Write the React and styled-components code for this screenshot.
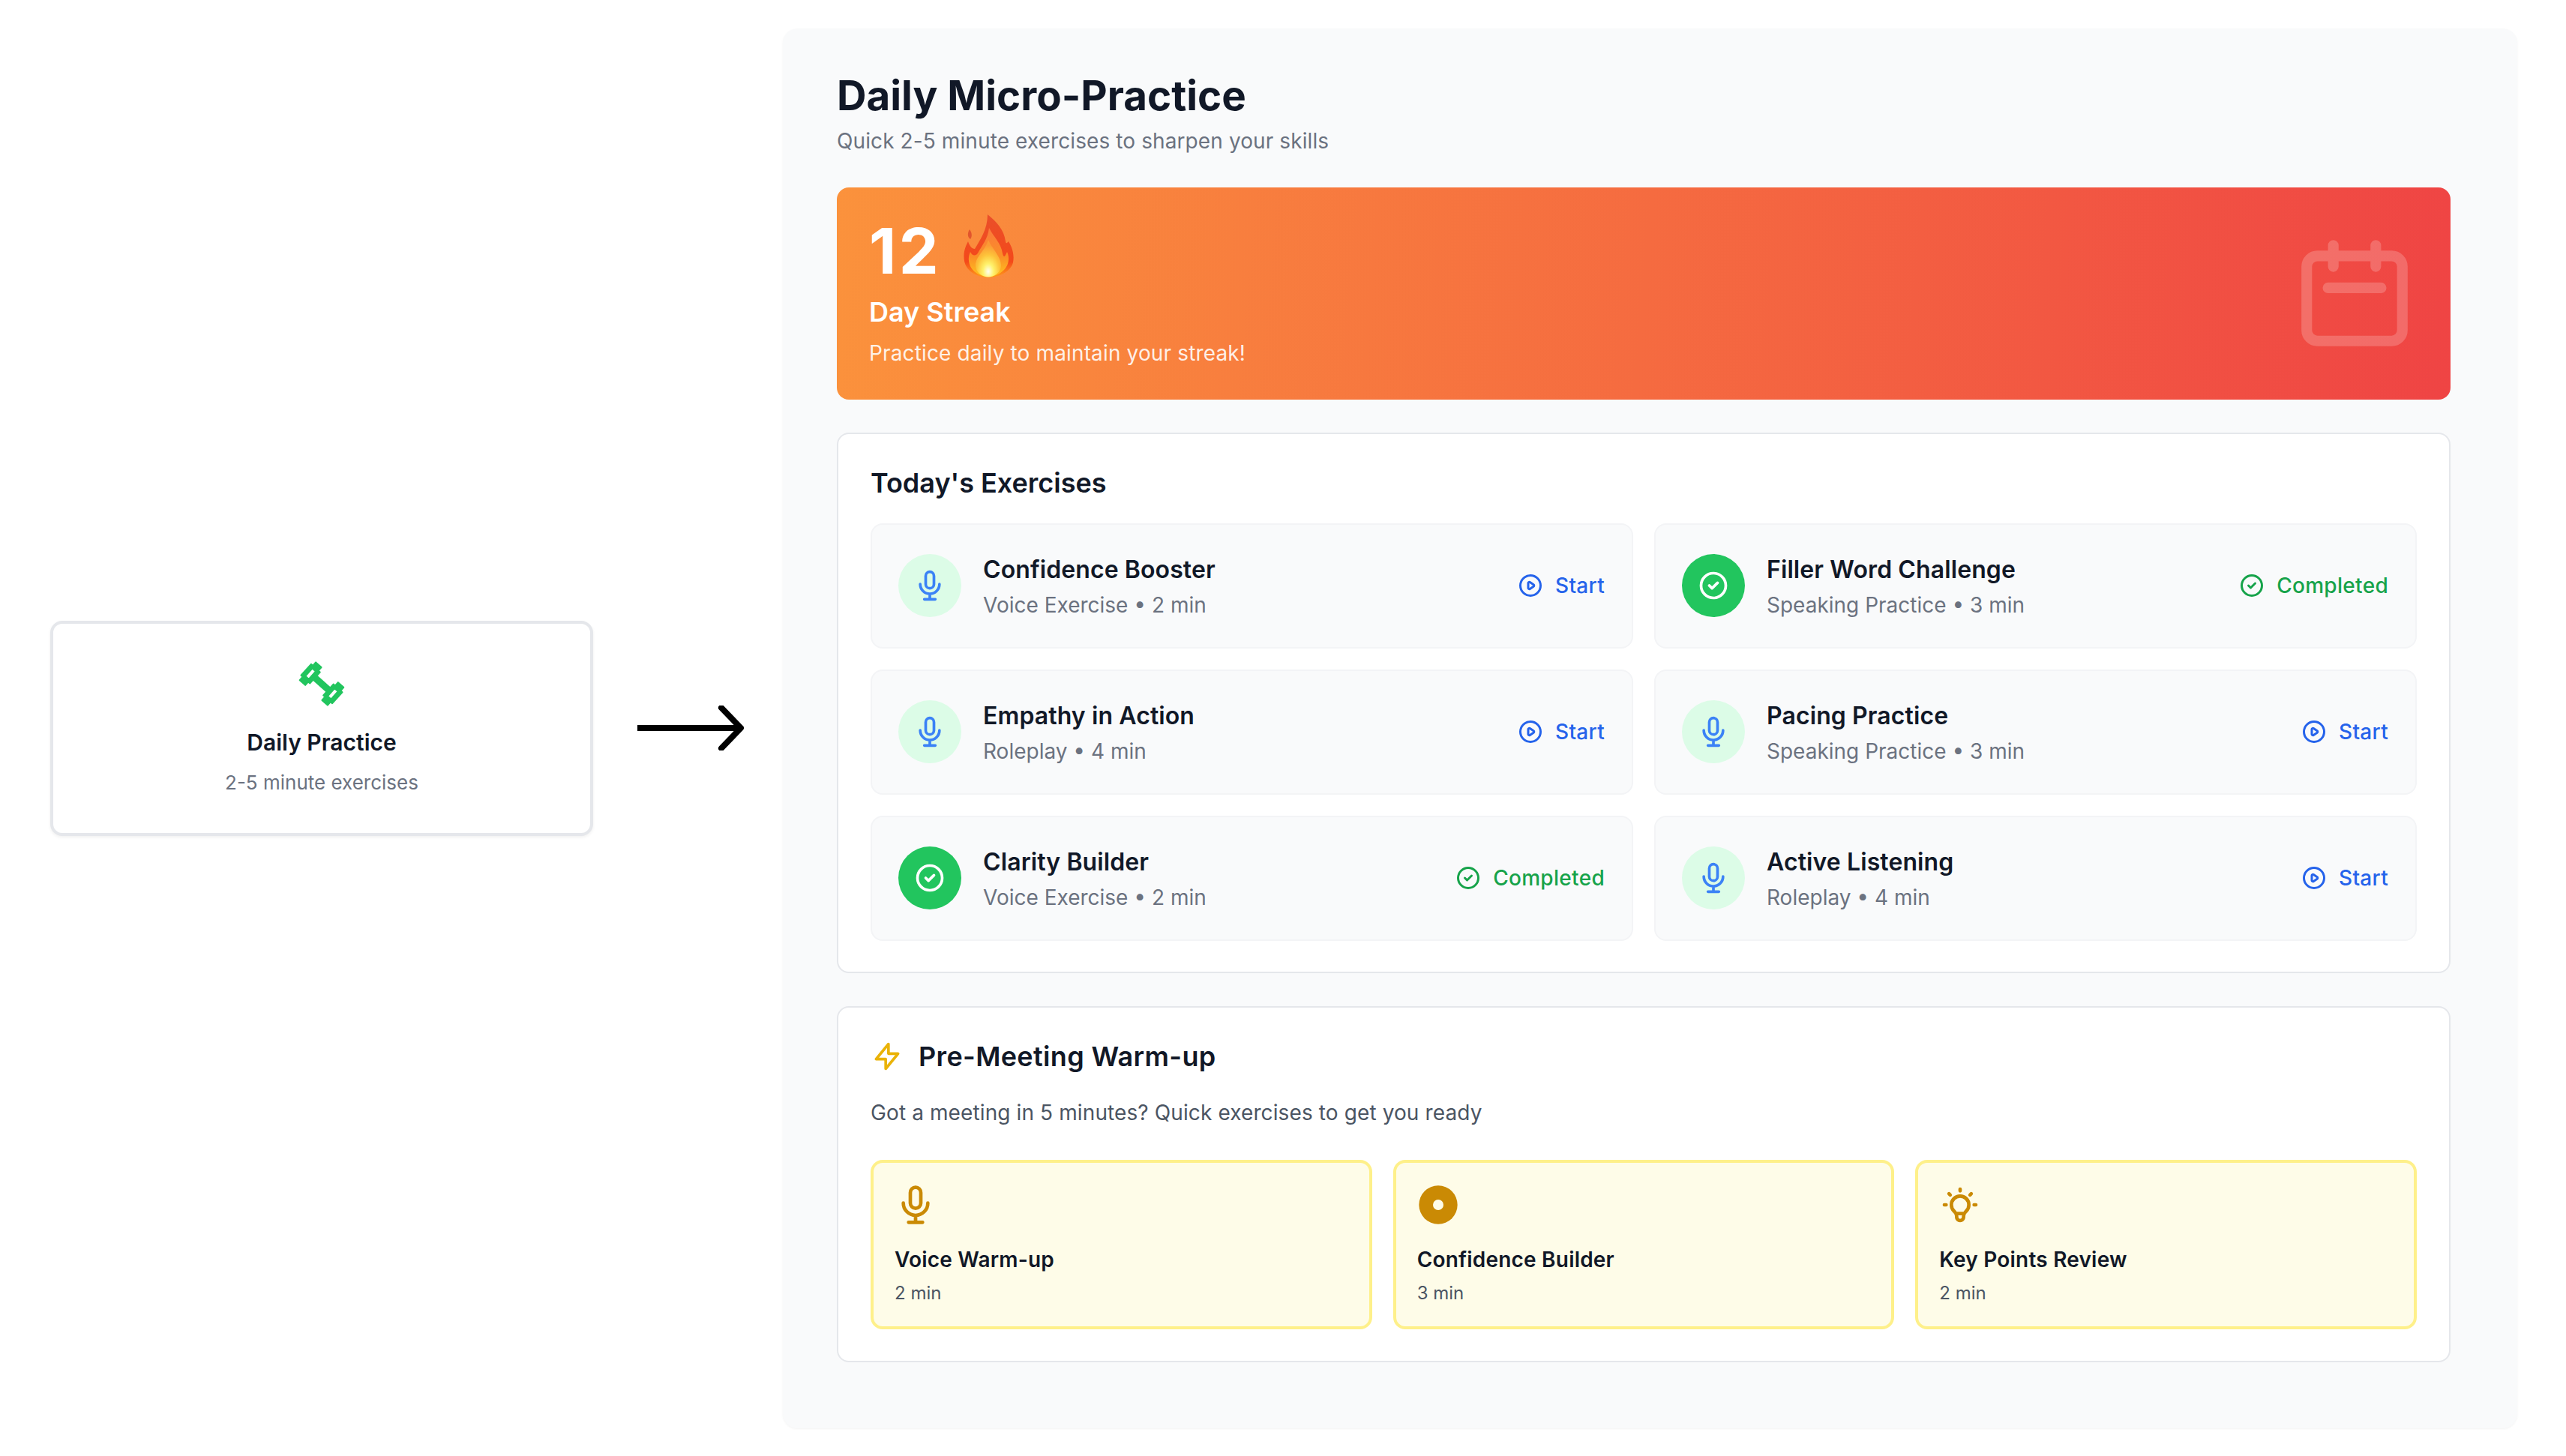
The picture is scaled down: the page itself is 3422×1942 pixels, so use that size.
import React from 'react'
import styled, { createGlobalStyle } from 'styled-components'

const GlobalStyle = createGlobalStyle`
    * { box-sizing: border-box; }
    body {
        margin: 0;
        background: #fff;
        font-family: Inter, "Liberation Sans", sans-serif;
        color: #111827;
    }
`

const Page = styled.div`
    display: flex;
    align-items: center;
    width: 3422px;
    height: 1942px;
    padding: 0 65px 0 67px;
`

const SourceCard = styled.div`
    width: 724px;
    height: 287px;
    flex: none;
    display: flex;
    flex-direction: column;
    align-items: center;
    padding-top: 48px;
    background: #fff;
    border: 4px solid #e5e7eb;
    border-radius: 16px;
    box-shadow: 0 2px 4px rgba(0, 0, 0, 0.06);
    color: #22c55e;
`

const SourceTitle = styled.div`
    margin-top: 26px;
    font-size: 30px;
    line-height: 40px;
    font-weight: 600;
    color: #111827;
`

const SourceSub = styled.div`
    margin-top: 16px;
    font-size: 26px;
    line-height: 36px;
    color: #6b7280;
`

const ArrowWrap = styled.div`
    flex: none;
    display: flex;
    margin: 0 52px 0 59px;
`

const Panel = styled.main`
    flex: 1;
    padding: 57px 89px 88px 72px;
    background: #f9fafb;
    border-radius: 20px;
    box-shadow: 0 1px 3px rgba(0, 0, 0, 0.05);
`

const Heading = styled.h1`
    margin: 0;
    font-size: 54.7px;
    line-height: 64px;
    font-weight: 700;
    color: #111827;
`

const HeadingSub = styled.p`
    margin: 9px 0 42px;
    font-size: 28px;
    line-height: 40px;
    letter-spacing: 0.1px;
    color: #6b7280;
`

const Streak = styled.section`
    display: flex;
    align-items: center;
    justify-content: space-between;
    height: 283px;
    padding: 0 43px;
    border-radius: 16px;
    background: linear-gradient(95deg, #fb923c 0%, #ef4444 100%);
    color: #fff;
`

const StreakBody = styled.div`
    padding-bottom: 4px;
`

const StreakCount = styled.div`
    display: flex;
    align-items: center;
    gap: 30px;
    font-size: 84px;
    line-height: 96px;
    font-weight: 700;
    letter-spacing: 3.5px;
`

const FlameWrap = styled.div`
    margin-top: -14px;
`

const StreakLabel = styled.div`
    margin-top: 9px;
    font-size: 36px;
    line-height: 48px;
    font-weight: 600;
`

const StreakNote = styled.div`
    margin-top: 11px;
    font-size: 28px;
    line-height: 40px;
    letter-spacing: 0.14px;
    color: rgba(255, 255, 255, 0.9);
`

const StreakIcon = styled.div`
    display: flex;
    color: rgba(255, 255, 255, 0.2);
`

const Section = styled.section`
    margin-top: 44px;
    padding: 41px 43px ${(p) => p.$bottom}px;
    background: #fff;
    border: 2px solid #e5e7eb;
    border-radius: 16px;
`

const SectionTitle = styled.h2`
    margin: 0;
    font-size: 36px;
    line-height: 48px;
    font-weight: 600;
    letter-spacing: ${(p) => p.$spacing || 0}px;
    color: #111827;
`

const ExerciseGrid = styled.div`
    display: grid;
    grid-template-columns: 1fr 1fr;
    gap: 28px;
    margin-top: 30px;
`

const Exercise = styled.div`
    display: flex;
    align-items: center;
    height: 167px;
    padding: 0 36px 0 35px;
    background: #f9fafb;
    border: 2px solid #f3f4f6;
    border-radius: 16px;
`

const ExerciseBadge = styled.div`
    flex: none;
    display: flex;
    align-items: center;
    justify-content: center;
    width: 84px;
    height: 84px;
    margin-right: 29px;
    border-radius: 50%;
    background: ${(p) => (p.$done ? '#22c55e' : '#dcfce7')};
    color: ${(p) => (p.$done ? '#fff' : '#3b82f6')};
`

const ExerciseText = styled.div`
    flex: 1;
    padding-top: 2px;
`

const ExerciseName = styled.div`
    font-size: 32px;
    line-height: 44px;
    font-weight: 600;
    letter-spacing: 0.1px;
    color: #111827;
`

const ExerciseMeta = styled.div`
    margin-top: 5px;
    font-size: 28px;
    line-height: 40px;
    color: #6b7280;
`

const ExerciseAction = styled.div`
    display: flex;
    align-items: center;
    gap: 15px;
    font-size: 28px;
    line-height: 40px;
    font-weight: 500;
    letter-spacing: 0.3px;
    color: ${(p) => (p.$done ? '#16a34a' : '#2563eb')};
`

const WarmupHeader = styled.div`
    display: flex;
    align-items: center;
    gap: 20px;
    color: #eab308;
`

const WarmupSub = styled.p`
    margin: 31px 0 43px;
    font-size: 28px;
    line-height: 40px;
    letter-spacing: 0.11px;
    color: #4b5563;
`

const WarmupGrid = styled.div`
    display: grid;
    grid-template-columns: repeat(3, 1fr);
    gap: 28px;
`

const WarmupCard = styled.div`
    height: 226px;
    padding: 28px;
    background: #fefce8;
    border: 4px solid #fef08a;
    border-radius: 16px;
    color: #ca8a04;
`

const WarmupName = styled.div`
    margin-top: 27px;
    font-size: 28px;
    line-height: 36px;
    font-weight: 600;
    letter-spacing: 0.2px;
    color: #111827;
`

const WarmupTime = styled.div`
    margin-top: 11px;
    font-size: 24px;
    line-height: 32px;
    color: #4b5563;
`

const Icon = ({ size, children }) => (
    <svg
        width={size}
        height={size}
        viewBox="0 0 24 24"
        fill="none"
        stroke="currentColor"
        strokeWidth="2"
        strokeLinecap="round"
        strokeLinejoin="round"
        style={{ display: 'block', flex: 'none' }}
    >
        {children}
    </svg>
)

const Mic = ({ size }) => (
    <Icon size={size}>
        <path d="M19 11a7 7 0 01-7 7m0 0a7 7 0 01-7-7m7 7v4m0 0H8m4 0h4m-4-8a3 3 0 01-3-3V5a3 3 0 116 0v6a3 3 0 01-3 3z" />
    </Icon>
)

const Play = ({ size }) => (
    <Icon size={size}>
        <path d="M14.752 11.168l-3.197-2.132A1 1 0 0010 9.87v4.263a1 1 0 001.555.832l3.197-2.132a1 1 0 000-1.664z" />
        <path d="M21 12a9 9 0 11-18 0 9 9 0 0118 0z" />
    </Icon>
)

const CheckCircle = ({ size }) => (
    <Icon size={size}>
        <path d="M9 12l2 2 4-4m6 2a9 9 0 11-18 0 9 9 0 0118 0z" />
    </Icon>
)

const Bolt = () => (
    <Icon size={44}>
        <path d="M13 10V3L4 14h7v7l9-11h-7z" />
    </Icon>
)

const Calendar = () => (
    <Icon size={170}>
        <path d="M8 7V3m8 4V3M7 11h10M5 21h14a2 2 0 002-2V7a2 2 0 00-2-2H5a2 2 0 00-2 2v12a2 2 0 002 2z" />
    </Icon>
)

const Bulb = () => (
    <Icon size={56}>
        <path d="M9.663 17h4.673M12 3v1m6.364 1.636l-.707.707M21 12h-1M4 12H3m3.343-5.657l-.707-.707m2.828 9.9a5 5 0 117.072 0l-.548.547A3.374 3.374 0 0014 18.469V19a2 2 0 11-4 0v-.531c0-.895-.356-1.754-.988-2.386l-.548-.547z" />
    </Icon>
)

const Target = () => (
    <svg width="56" height="56" viewBox="0 0 24 24" style={{ display: 'block' }}>
        <circle cx="12" cy="12" r="11" fill="currentColor" />
        <circle cx="12" cy="12" r="3" fill="#fefce8" />
    </svg>
)

// plate with a slot and stepped ends, drawn around its own centre
const plate =
    'M-8 -10H-5V-16H5V-10H8V10H5V16H-5V10H-8ZM-3 -7V7H3V-7Z'

const Dumbbell = () => (
    <svg width="64" height="64" viewBox="0 0 64 64" style={{ display: 'block' }}>
        <g
            transform="translate(32 32) rotate(42)"
            fill="currentColor"
            stroke="currentColor"
            strokeWidth="2"
            strokeLinejoin="round"
        >
            <rect x="-13" y="-3.500" width="26" height="7" />
            <path transform="translate(-20 0)" fillRule="evenodd" d={plate} />
            <path transform="translate(20 0)" fillRule="evenodd" d={plate} />
        </g>
    </svg>
)

const Arrow = () => (
    <svg width="142" height="60" viewBox="0 0 142 60" fill="none" stroke="#000" strokeWidth="8" style={{ display: 'block' }}>
        <path d="M0 30h136" />
        <path d="M112 3l26 27-26 27" strokeLinecap="round" strokeLinejoin="round" />
    </svg>
)

const Flame = () => (
    <svg width="67" height="84" viewBox="0 0 67 84" role="img" aria-label="fire" style={{ display: 'block' }}>
        <defs>
            <linearGradient id="flameOuter" x1="0" y1="0" x2="0" y2="1">
                <stop offset="0" stopColor="#ea4f2a" />
                <stop offset="0.75" stopColor="#f4491a" />
                <stop offset="1" stopColor="#ff9a1a" />
            </linearGradient>
            <linearGradient id="flameMid" x1="0" y1="0" x2="0" y2="1">
                <stop offset="0" stopColor="#fa7a3c" />
                <stop offset="0.6" stopColor="#fb8f26" />
                <stop offset="1" stopColor="#ffc31f" />
            </linearGradient>
            <radialGradient id="flameCore" cx="0.5" cy="0.85" r="0.7">
                <stop offset="0" stopColor="#fffff0" />
                <stop offset="0.3" stopColor="#fff26b" />
                <stop offset="0.65" stopColor="#fdc33a" />
                <stop offset="1" stopColor="#fb9a35" />
            </radialGradient>
        </defs>
        <path fill="url(#flameOuter)" d="M32 0C44 10 54 20 56 36C57 40 58 38 60 36C65 44 68 54 66 64C64 74 50 84 33 84C16 84 3 74 1 62C-1 50 3 42 6 36C8 42 11 46 15 46C22 34 32 20 32 0Z" />
        <path fill="#e2552d" d="M8 20C11 24 12 29 9 33C5 30 5 25 8 20Z" />
        <path fill="url(#flameMid)" d="M34 18C40 30 50 38 52 52C54 60 56 54 58 50C62 58 60 68 54 74C48 80 40 83 33 83C25 83 15 79 10 71C6 64 6 56 9 50C12 56 17 56 20 50C24 42 32 34 34 18Z" />
        <path fill="url(#flameCore)" d="M33 34C38 46 50 56 50 68C50 78 40 83.500 33 83.500C26 83.500 16 78 16 68C16 56 29 48 33 34Z" />
    </svg>
)

const exercises = [
    { name: 'Confidence Booster', meta: 'Voice Exercise • 2 min' },
    { name: 'Filler Word Challenge', meta: 'Speaking Practice • 3 min', done: true },
    { name: 'Empathy in Action', meta: 'Roleplay • 4 min' },
    { name: 'Pacing Practice', meta: 'Speaking Practice • 3 min' },
    { name: 'Clarity Builder', meta: 'Voice Exercise • 2 min', done: true },
    { name: 'Active Listening', meta: 'Roleplay • 4 min' },
]

const warmups = [
    { name: 'Voice Warm-up', time: '2 min', icon: <Mic size={56} /> },
    { name: 'Confidence Builder', time: '3 min', icon: <Target /> },
    { name: 'Key Points Review', time: '2 min', icon: <Bulb /> },
]

export default function App() {
    return (
        <Page>
            <GlobalStyle />
            <SourceCard>
                <Dumbbell />
                <SourceTitle>Daily Practice</SourceTitle>
                <SourceSub>2-5 minute exercises</SourceSub>
            </SourceCard>
            <ArrowWrap>
                <Arrow />
            </ArrowWrap>
            <Panel>
                <Heading>Daily Micro-Practice</Heading>
                <HeadingSub>Quick 2-5 minute exercises to sharpen your skills</HeadingSub>
                <Streak>
                    <StreakBody>
                        <StreakCount>
                            12
                            <FlameWrap>
                                <Flame />
                            </FlameWrap>
                        </StreakCount>
                        <StreakLabel>Day Streak</StreakLabel>
                        <StreakNote>Practice daily to maintain your streak!</StreakNote>
                    </StreakBody>
                    <StreakIcon>
                        <Calendar />
                    </StreakIcon>
                </Streak>
                <Section $bottom={41}>
                    <SectionTitle>Today's Exercises</SectionTitle>
                    <ExerciseGrid>
                        {exercises.map((item) => (
                            <Exercise key={item.name}>
                                <ExerciseBadge $done={item.done}>
                                    {item.done ? <CheckCircle size={44} /> : <Mic size={44} />}
                                </ExerciseBadge>
                                <ExerciseText>
                                    <ExerciseName>{item.name}</ExerciseName>
                                    <ExerciseMeta>{item.meta}</ExerciseMeta>
                                </ExerciseText>
                                <ExerciseAction $done={item.done}>
                                    {item.done ? <CheckCircle size={36} /> : <Play size={36} />}
                                    {item.done ? 'Completed' : 'Start'}
                                </ExerciseAction>
                            </Exercise>
                        ))}
                    </ExerciseGrid>
                </Section>
                <Section $bottom={42}>
                    <WarmupHeader>
                        <Bolt />
                        <SectionTitle $spacing={0.35}>Pre-Meeting Warm-up</SectionTitle>
                    </WarmupHeader>
                    <WarmupSub>Got a meeting in 5 minutes? Quick exercises to get you ready</WarmupSub>
                    <WarmupGrid>
                        {warmups.map((item) => (
                            <WarmupCard key={item.name}>
                                {item.icon}
                                <WarmupName>{item.name}</WarmupName>
                                <WarmupTime>{item.time}</WarmupTime>
                            </WarmupCard>
                        ))}
                    </WarmupGrid>
                </Section>
            </Panel>
        </Page>
    )
}
